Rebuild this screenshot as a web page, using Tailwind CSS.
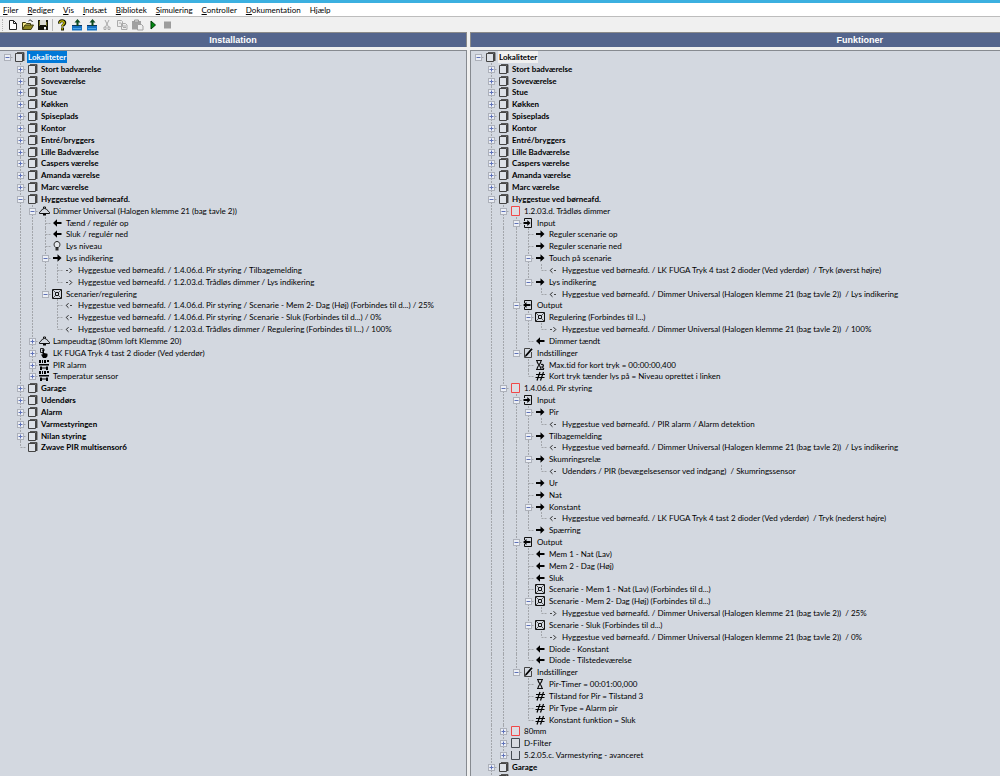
<!DOCTYPE html>
<html lang="da">
<head>
<meta charset="utf-8">
<meta name="viewport" content="width=device-width, initial-scale=1">
<title>Installation og funktioner</title>
<script src="https://cdn.jsdelivr.net/npm/@tailwindcss/browser@4"></script>
</head>
<body class="flex h-screen flex-col overflow-hidden bg-[#f0f0f0] font-['Lato','Noto_Sans',sans-serif] text-[8px] leading-3 text-black [font-variant-ligatures:none]">

<svg class="hidden" aria-hidden="true">
  <symbol id="folder" viewBox="0 0 12 12"><path d="M4 1.500h7v8.500" fill="none" stroke="#555"/><path d="M10 2h1v8h-1z" fill="#444"/><path d="M2.500 2.500h7v8h-7z" fill="#dde1e7" stroke="#444"/></symbol>
  <symbol id="red" viewBox="0 0 12 12"><path d="M2.500 1.500h8v9h-8z" fill="#dcdde3" stroke="#f04848"/></symbol>
  <symbol id="block" viewBox="0 0 12 12"><path d="M2.500 1.500h8v9h-8z" fill="#d8dce2" stroke="#444b52"/></symbol>
  <symbol id="cup" viewBox="0 0 12 12"><path d="M2.500 2v8.500h8V2" fill="none" stroke="#444b52"/></symbol>
  <symbol id="lamp" viewBox="0 0 12 12"><path d="M1.500 8.500h10v-1.200C9.500 6.500 9.500 3.500 6.500 3.500S3.500 6.500 1.500 7.300zM5.500 3.500V2h2v1.500" fill="none" stroke="#111"/><path d="M5 9h3v1.500H5z"/></symbol>
  <symbol id="left" viewBox="0 0 12 12"><path d="M2 6l4-3.700v2.700h4.500v2H6v2.700z"/></symbol>
  <symbol id="right" viewBox="0 0 12 12"><path d="M10.500 6l-4-3.700v2.700H2v2h4.500v2.700z"/></symbol>
  <symbol id="bulb" viewBox="0 0 12 12"><path d="M4.700 7.500C2 5.500 3 1.500 6 1.500s4 4 1.400 6z" fill="#e4e7eb" stroke="#222"/><path d="M4.500 8h3v2.500h-3z" fill="#333"/></symbol>
  <symbol id="out" viewBox="0 0 12 12"><path d="M3 6.500h2" fill="none" stroke="#444"/><path d="M6.500 4.200L8.800 6.500 6.500 8.800" fill="none" stroke="#222"/></symbol>
  <symbol id="in" viewBox="0 0 12 12"><path d="M9 6.500H7" fill="none" stroke="#444"/><path d="M5.500 4.200L3.200 6.500l2.300 2.300" fill="none" stroke="#222"/></symbol>
  <symbol id="scene" viewBox="0 0 12 12"><path d="M1.500 1.500h9v9h-9zM4.500 4.500h3v3h-3z" fill="none" stroke="#111"/><path d="M2 2l2 2M10 2L8 4M2 10l2-2M10 10L8 8" stroke="#555"/></symbol>
  <symbol id="touch" viewBox="0 0 12 12"><path d="M2.500 1.500h3v4h-3zM4 3h3" fill="none" stroke="#222"/><path d="M4.500 3h1.500v3l3.500.700v2.600L8 11H5L3 7.500h1.500z"/></symbol>
  <symbol id="sensor" viewBox="0 0 12 12"><path d="M1 1h2v3H1zM4 1h1v3H4zM6 1h2v3H6zM9 1h2v2H9zM1 5h10v1.500H1zM2 8.500h8v1H2zM2 7.500h2V11H2zM8 7.500h2V11H8z"/></symbol>
  <symbol id="input" viewBox="0 0 12 12"><path d="M2.500 4V1.500h7v9h-7V8" fill="none" stroke="#111"/><path d="M8.500 6L5.300 3v2H1.500v2h3.800v2z"/></symbol>
  <symbol id="output" viewBox="0 0 12 12"><path d="M2.500 4V1.500h7v9h-7V8" fill="none" stroke="#111"/><path d="M1 6l3.500-3v2h4v2h-4v2z"/></symbol>
  <symbol id="settings" viewBox="0 0 12 12"><path d="M9.500 5v5.500h-7v-9H8" fill="none" stroke="#444"/><path d="M3 10l.400-2L9.200 1.200l1.500 1L4.800 9z"/></symbol>
  <symbol id="glass" viewBox="0 0 12 12"><path d="M3 1.500h6M3 10.500h6M4 2c0 3 4 5 4 8M8 2c0 3-4 5-4 8" fill="none" stroke="#111" stroke-width="1.200"/></symbol>
  <symbol id="glasskey" viewBox="0 0 12 12"><path d="M2 1.500h6M2 10.500h8M3 2c0 3 4 5 4 8M7 2c0 3-4 5-4 8M7 5.500c3-.500 3 2 1 2.500l2 2" fill="none" stroke="#111" stroke-width="1.200"/></symbol>
  <symbol id="hash" viewBox="0 0 12 12"><path d="M2 4.500h9M1.500 7.500h9M6 2L3 10.500M9.500 2l-3 8.500" fill="none" stroke="#000" stroke-width="1.200"/></symbol>
</svg>

<div class="h-[3px] shrink-0 bg-[#3cb0e0]"></div>

<nav aria-label="Menu" class="flex h-[14px] shrink-0 items-center gap-[9px] border-b border-[#bdbdbd] bg-white px-[3px]">
  <button><u>F</u>iler</button>
  <button><u>R</u>ediger</button>
  <button><u>V</u>is</button>
  <button><u>I</u>ndsæt</button>
  <button><u>B</u>ibliotek</button>
  <button><u>S</u>imulering</button>
  <button><u>C</u>ontroller</button>
  <button><u>D</u>okumentation</button>
  <button>H<u>j</u>ælp</button>
</nav>

<div role="toolbar" aria-label="Værktøjer" class="flex h-[15px] shrink-0 items-center gap-[3px] pl-[2px]">
  <span class="h-3 w-[2px] border-l border-dotted border-[#b5b5b5]"></span>
  <button aria-label="Ny"><svg class="h-3 w-3" viewBox="0 0 12 12"><path d="M2.500 1.500h4l3 3v6h-7z" fill="#fff" stroke="#222"/><path d="M6.500 1.500v3h3" fill="none" stroke="#222"/></svg></button>
  <button aria-label="Åbn"><svg class="h-3 w-3" viewBox="0 0 12 12"><path d="M.500 10V3.500h3l1 1h4V6" fill="#f5e98c" stroke="#3c3a10"/><path d="M.500 10.500L3 6h8.500L9 10.500z" fill="#8c8620" stroke="#3c3a10"/><path d="M6.500 2c1.500-1.500 3-1 4 1" fill="none" stroke="#222"/></svg></button>
  <button aria-label="Gem"><svg class="h-3 w-3" viewBox="0 0 12 12"><path d="M1 1h10v10H1z" fill="#15150c"/><path d="M3 1h6v5H3z" fill="#dcdcd4"/><path d="M2 2h1v5H2zM9 3h1v4H9z" fill="#77762a"/><path d="M7 8h2v2.500H7z" fill="#f4f4f4"/></svg></button>
  <span class="h-3 w-px bg-[#b8b8b8]"></span>
  <button aria-label="Hjælp"><svg class="h-3 w-3" viewBox="0 0 12 12"><path d="M3.500 4.500C3 .800 9 .800 8.800 4 8.700 5.800 6.500 5.800 6.500 7.500" fill="none" stroke="#1c1c00" stroke-width="3"/><path d="M5 8.500h3V11.500H5z" fill="#1c1c00"/><path d="M3.600 4C3.600 1.200 8.500 1.200 8.300 4 8.200 5.500 6.200 5.600 6.200 7.500M6.200 9v1.500" fill="none" stroke="#c8c000" stroke-width="1.300"/></svg></button>
  <button aria-label="Hent"><svg class="h-3 w-3" viewBox="0 0 12 12"><path d="M1 6h10v5.500H1z" fill="#1673c4"/><path d="M1 6h10v1H1z" fill="#0a3764"/><path d="M2 9h8v.800H2z" fill="#59b4f0"/><path d="M6.500 0l3 3.500h-2V7h-2V3.500h-2z" fill="#0c4a20"/></svg></button>
  <button aria-label="Send"><svg class="h-3 w-3" viewBox="0 0 12 12"><path d="M1 6h10v5.500H1z" fill="#1673c4"/><path d="M1 6h10v1H1z" fill="#0a3764"/><path d="M2 9h8v.800H2z" fill="#59b4f0"/><path d="M6.500 0l3 3.500h-2V7h-2V3.500h-2z" fill="#0c4a20"/></svg></button>
  <button aria-label="Klip"><svg class="h-3 w-3" viewBox="0 0 12 12"><path d="M4 1l3.500 7M8 1L4.500 8M3 8h2v2.500H3zM7 8h2v2.500H7z" fill="none" stroke="#aaa"/></svg></button>
  <button aria-label="Kopier"><svg class="h-3 w-3" viewBox="0 0 12 12"><path d="M1.500 1.500h4l1 1v5h-5zM5.500 4.500h4l1.500 1.500v4.500H5.500z" fill="#ececec" stroke="#aaa"/><path d="M7 7h3M7 8.500h3M3 4h2" stroke="#aaa"/></svg></button>
  <button aria-label="Sæt ind"><svg class="h-3 w-[13px]" viewBox="0 0 13 12"><path d="M1 2h9v8.500H1z" fill="#a0a0a0"/><path d="M3.500 1h4v2h-4z" fill="#ddd" stroke="#999"/><path d="M6.500 5.500h4l1.500 1.500v4H6.500z" fill="#eee" stroke="#a0a0a0"/></svg></button>
  <button aria-label="Start"><svg class="h-3 w-3" viewBox="0 0 12 12"><path d="M4 2l4.500 4L4 10z" fill="#008a10" stroke="#003c08"/></svg></button>
  <button aria-label="Stop"><svg class="h-3 w-3" viewBox="0 0 12 12"><path d="M2 2.500h7v7H2z" fill="#9c9c9c"/></svg></button>
</div>

<main class="flex min-h-0 flex-1 gap-[3px] overflow-hidden">
  <section aria-labelledby="t1" class="flex w-[467px] max-w-[47%] shrink-0 flex-col gap-[3px] overflow-hidden">
    <h2 id="t1" class="h-[15px] shrink-0 border-t border-r border-[#8a8a8a] bg-[#54658d] text-center font-['Liberation_Sans',sans-serif] text-[9px] leading-[15px] font-bold text-white">Installation</h2>
    <div id="installation" role="tree" aria-labelledby="t1" class="flex-1 overflow-hidden border-t border-r border-[#868a90] bg-[#d3d8e0] pl-px"></div>
  </section>
  <section aria-labelledby="t2" class="flex min-w-0 flex-1 flex-col gap-[3px] overflow-hidden">
    <div class="h-[15px] shrink-0 overflow-hidden border-t border-l border-[#8a8a8a] bg-[#54658d]">
      <h2 id="t2" class="w-[147%] text-center font-['Liberation_Sans',sans-serif] text-[9px] leading-[15px] font-bold text-white">Funktioner</h2>
    </div>
    <div id="functions" role="tree" aria-labelledby="t2" class="flex-1 overflow-hidden border-t border-l border-[#868a90] bg-[#d3d8e0] pl-px"></div>
  </section>
</main>

<script>
// Each entry: indent level, icon, state (+ collapsed, - expanded, "" leaf), label
const rooms = ["Stort badværelse","Soveværelse","Stue","Køkken","Spiseplads","Kontor","Entré/bryggers","Lille Badværelse","Caspers værelse","Amanda værelse","Marc værelse"].map(n => [1,"folder","+",n]);
const H = "Hyggestue ved børneafd. / ", D = H + "Dimmer Universal (Halogen klemme 21 (bag tavle 2))\u00a0 / ", F = H + "LK FUGA Tryk 4 tast 2 dioder (Ved yderdør)\u00a0 / ";

const installation = [
  [0,"folder","-","Lokaliteter"], ...rooms,
  [1,"folder","-","Hyggestue ved børneafd."],
  [2,"lamp","-","Dimmer Universal (Halogen klemme 21 (bag tavle 2))"],
  [3,"left","","Tænd / regulér op"],
  [3,"left","","Sluk / regulér ned"],
  [3,"bulb","","Lys niveau"],
  [3,"right","-","Lys indikering"],
  [4,"out","",H+"1.4.06.d. Pir styring / Tilbagemelding"],
  [4,"out","",H+"1.2.03.d. Trådløs dimmer / Lys indikering"],
  [3,"scene","-","Scenarier/regulering"],
  [4,"in","",H+"1.4.06.d. Pir styring / Scenarie - Mem 2- Dag (Høj) (Forbindes til d...) / 25%"],
  [4,"in","",H+"1.4.06.d. Pir styring / Scenarie - Sluk (Forbindes til d...) / 0%"],
  [4,"in","",H+"1.2.03.d. Trådløs dimmer / Regulering (Forbindes til l...) / 100%"],
  [2,"lamp","+","Lampeudtag (80mm loft Klemme 20)"],
  [2,"touch","+","LK FUGA Tryk 4 tast 2 dioder (Ved yderdør)"],
  [2,"sensor","+","PIR alarm"],
  [2,"sensor","+","Temperatur sensor"],
  [1,"folder","+","Garage"],
  [1,"folder","+","Udendørs"],
  [1,"folder","+","Alarm"],
  [1,"folder","+","Varmestyringen"],
  [1,"folder","+","Nilan styring"],
  [1,"folder","","Zwave PIR multisensor6"],
];

const functions = [
  [0,"folder","-","Lokaliteter"], ...rooms,
  [1,"folder","-","Hyggestue ved børneafd."],
  [2,"red","-","1.2.03.d. Trådløs dimmer"],
  [3,"input","-","Input"],
  [4,"right","","Reguler scenarie op"],
  [4,"right","","Reguler scenarie ned"],
  [4,"right","-","Touch på scenarie"],
  [5,"in","",F+"Tryk (øverst højre)"],
  [4,"right","-","Lys indikering"],
  [5,"in","",D+"Lys indikering"],
  [3,"output","-","Output"],
  [4,"scene","-","Regulering (Forbindes til l...)"],
  [5,"out","",D+"100%"],
  [4,"left","","Dimmer tændt"],
  [3,"settings","-","Indstillinger"],
  [4,"glasskey","","Max.tid for kort tryk = 00:00:00,400"],
  [4,"hash","","Kort tryk tænder lys på = Niveau oprettet i linken"],
  [2,"red","-","1.4.06.d. Pir styring"],
  [3,"input","-","Input"],
  [4,"right","-","Pir"],
  [5,"in","",H+"PIR alarm / Alarm detektion"],
  [4,"right","-","Tilbagemelding"],
  [5,"in","",D+"Lys indikering"],
  [4,"right","-","Skumringsrelæ"],
  [5,"in","","Udendørs / PIR (bevægelsesensor ved indgang)\u00a0 / Skumringssensor"],
  [4,"right","","Ur"],
  [4,"right","","Nat"],
  [4,"right","-","Konstant"],
  [5,"in","",F+"Tryk (nederst højre)"],
  [4,"right","","Spærring"],
  [3,"output","-","Output"],
  [4,"left","","Mem 1 - Nat (Lav)"],
  [4,"left","","Mem 2 - Dag (Høj)"],
  [4,"left","","Sluk"],
  [4,"scene","","Scenarie - Mem 1 - Nat (Lav) (Forbindes til d...)"],
  [4,"scene","-","Scenarie - Mem 2- Dag (Høj) (Forbindes til d...)"],
  [5,"out","",D+"25%"],
  [4,"scene","-","Scenarie - Sluk (Forbindes til d...)"],
  [5,"out","",D+"0%"],
  [4,"left","","Diode - Konstant"],
  [4,"left","","Diode - Tilstedeværelse"],
  [3,"settings","-","Indstillinger"],
  [4,"glass","","Pir-Timer = 00:01:00,000"],
  [4,"hash","","Tilstand for Pir = Tilstand 3"],
  [4,"hash","","Pir Type = Alarm pir"],
  [4,"hash","","Konstant funktion = Sluk"],
  [2,"red","+","80mm"],
  [2,"block","+","D-Filter"],
  [2,"cup","+","5.2.05.c. Varmestyring - avanceret"],
  [1,"folder","+","Garage"],
  [1,"folder","+","Udendørs"],
];

// True when another node of the given level follows before its parent closes
const continues = (rows, i, level) => {
  for (let j = i + 1; j < rows.length && rows[j][0] >= level; j++) if (rows[j][0] === level) return true;
  return false;
};

const cell = (k, up, down, stub, box) => {
  const w = k % 2 ? 13 : 12, c = k % 2 ? 7.5 : 6.5;
  let s = "";
  if (up) s += `<path d="M${c} 0V6"/>`;
  if (down) s += `<path d="M${c} 6V12"/>`;
  if (stub) s += `<path d="M${c} 6.5H${w}"/>`;
  s = `<g stroke="#a3a6ab" stroke-dasharray="2 1">${s}</g>`;
  if (box) s += `<rect x="${c-3}" y="3.5" width="6" height="6" fill="#eceff5" stroke="#adb1ba"/><path d="M${c-2} 6.5h4${box === "+" ? `M${c} 4.5v4` : ""}" stroke="#5f72b8"/>`;
  const svg = `<svg class="${k % 2 ? "h-3 w-[13px]" : "h-3 w-3"}" viewBox="0 0 ${w} 12" fill="none" aria-hidden="true">${s}</svg>`;
  return box ? `<button class="shrink-0" aria-label="${box === "+" ? "Udvid" : "Skjul"}">${svg}</button>` : `<span class="shrink-0">${svg}</span>`;
};

const draw = (id, rows, rootStyle) => {
  document.getElementById(id).innerHTML = rows.map(([level, icon, state, text], i) => {
    let cells = "";
    for (let k = 0; k < level; k++) { const on = k > 0 && continues(rows, i, k); cells += cell(k, on, on, false, ""); }
    cells += cell(level, level > 0, level > 0 && continues(rows, i, level), true, state);
    const style = level === 0 ? rootStyle : level === 1 ? "px-px font-bold" : "px-px";
    return `<div role="treeitem" aria-level="${level + 1}" class="flex h-3 items-start overflow-hidden whitespace-nowrap nth-[6n+3]:h-[11px]">${cells}<svg class="h-3 w-3 shrink-0" aria-hidden="true"><use href="#${icon}"/></svg><span class="ml-[2px] ${style}">${text}</span></div>`;
  }).join("");
};

draw("installation", installation, "px-px font-bold bg-[#0078d7] text-white");
draw("functions", functions, "px-px font-bold bg-[#f0f0f0]");
</script>
</body>
</html>
